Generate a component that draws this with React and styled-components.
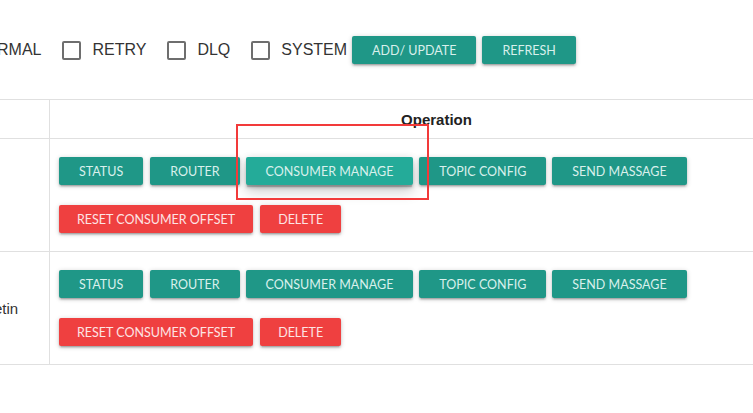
import styled, { createGlobalStyle, css } from 'styled-components';

const GlobalStyle = createGlobalStyle`
  html, body {
    margin: 0;
    padding: 0;
    background: #fff;
  }
  body {
    font-family: "Liberation Sans", Arial, sans-serif;
    color: #222;
    overflow: hidden;
  }
`;

const Page = styled.div`
  position: relative;
  width: 753px;
  height: 413px;
  overflow: hidden;
`;

const Toolbar = styled.div`
  display: flex;
  align-items: center;
  height: 28px;
  padding-top: 36px;
  margin-left: -57px;
  white-space: nowrap;
`;

const CheckLabel = styled.label`
  display: flex;
  align-items: center;
  gap: 11px;
  margin-right: ${(pr) => (pr.last ? '5px' : '21px')};
  font-size: 16px;
  color: #333;
`;

const Box = styled.span`
  box-sizing: border-box;
  width: 19px;
  height: 19px;
  border: 2px solid #6e6e6e;
  border-radius: 2px;
  flex-shrink: 0;
`;

const Btn = styled.button`
  height: 28px;
  padding: ${(pr) => (pr.danger ? '0 18px' : '0 20px')};
  margin-right: ${(pr) => pr.gap || '6px'};
  border: none;
  border-radius: 2px;
  font-family: Lato, "Open Sans", sans-serif;
  font-size: 12.5px;
  text-transform: uppercase;
  white-space: nowrap;
  cursor: pointer;
  background: ${(pr) => (pr.danger ? '#ef4040' : '#1f9787')};
  color: ${(pr) => (pr.danger ? '#fde4e4' : '#d9f0ec')};
  box-shadow: 0 2px 2px 0 rgba(0, 0, 0, 0.14), 0 3px 1px -2px rgba(0, 0, 0, 0.12),
    0 1px 5px 0 rgba(0, 0, 0, 0.2);

  ${(pr) =>
    pr.hover &&
    css`
      background: #24ab99;
      box-shadow: 0 3px 3px 0 rgba(0, 0, 0, 0.14), 0 1px 7px 0 rgba(0, 0, 0, 0.12),
        0 3px 1px -1px rgba(0, 0, 0, 0.2), 0 7px 14px rgba(0, 0, 0, 0.18);
    `}
`;

const Table = styled.table`
  margin-top: 35px;
  margin-left: -40px;
  width: 863px;
  border-collapse: collapse;
  font-size: 14px;
`;

const Th = styled.th`
  height: 38px;
  padding: 0;
  border-top: 1px solid #e0e0e0;
  border-bottom: 1px solid #e0e0e0;
  border-left: ${(pr) => (pr.first ? 'none' : '1px solid #e0e0e0')};
  width: ${(pr) => (pr.first ? '89px' : 'auto')};
  font-size: 15px;
  font-weight: bold;
  color: #222;
  text-align: center;
`;

const Td = styled.td`
  height: 113px;
  padding: 0 0 0 9px;
  box-sizing: border-box;
  border-bottom: 1px solid #e0e0e0;
  border-left: ${(pr) => (pr.first ? 'none' : '1px solid #e0e0e0')};
  font-size: 15px;
  color: #333;
  vertical-align: middle;
`;

const BtnRow = styled.div`
  display: flex;
  & + & {
    margin-top: 20px;
  }
`;

const Highlight = styled.div`
  position: absolute;
  left: 236px;
  top: 124px;
  width: 193px;
  height: 76px;
  box-sizing: border-box;
  border: 2px solid #f23a3a;
  pointer-events: none;
`;

const Operations = ({ highlight }) => (
  <>
    <BtnRow>
      <Btn gap="7px">Status</Btn>
      <Btn>Router</Btn>
      <Btn hover={highlight}>Consumer Manage</Btn>
      <Btn>Topic Config</Btn>
      <Btn>Send Massage</Btn>
    </BtnRow>
    <BtnRow>
      <Btn danger gap="7px">Reset Consumer Offset</Btn>
      <Btn danger>Delete</Btn>
    </BtnRow>
  </>
);

const App = () => {
  const filters = ['NORMAL', 'RETRY', 'DLQ', 'SYSTEM'];
  return (
    <Page>
      <GlobalStyle />
      <Toolbar>
        {filters.map((f, i) => (
          <CheckLabel key={f} last={i === filters.length - 1}>
            <Box />
            {f}
          </CheckLabel>
        ))}
        <Btn>Add/ Update</Btn>
        <Btn>Refresh</Btn>
      </Toolbar>
      <Table>
        <thead>
          <tr>
            <Th first></Th>
            <Th>Operation</Th>
          </tr>
        </thead>
        <tbody>
          <tr>
            <Td first></Td>
            <Td>
              <Operations highlight />
            </Td>
          </tr>
          <tr>
            <Td first>Bulletin</Td>
            <Td>
              <Operations />
            </Td>
          </tr>
        </tbody>
      </Table>
      <Highlight />
    </Page>
  );
};

export default App;
